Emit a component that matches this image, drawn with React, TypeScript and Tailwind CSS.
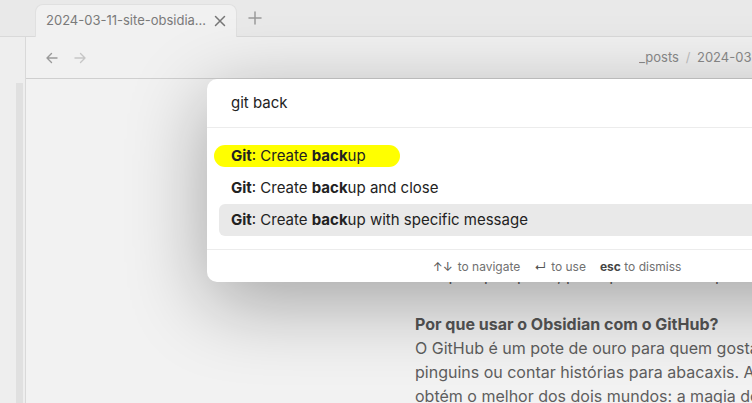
import React from "react";

function Item({ rest, selected, highlight }: { rest: string; selected?: boolean; highlight?: boolean }) {
  return (
    <div
      className={`relative h-[32px] flex items-center px-[12px] rounded-[6px] text-[15px] text-[#222] whitespace-nowrap ${
        selected ? "bg-[#e9e9e9]" : ""
      }`}
    >
      {highlight && (
        <span className="absolute left-[-5px] top-[5px] w-[186px] h-[22px] rounded-full bg-[#ffff00]" />
      )}
      <span className="relative">
        <span className="font-bold">Git</span>: Create <span className="font-bold">back</span>
        {rest}
      </span>
    </div>
  );
}

export default function App() {
  return (
    <div
      className="relative w-[752px] h-[403px] overflow-hidden bg-[#f2f2f2]"
      style={{ fontFamily: "Inter, 'Noto Sans', sans-serif" }}
    >
      {/* Tab bar */}
      <div className="h-[37px] flex items-end bg-[#e9e9e9]">
        <div className="w-[35px] h-full border-b border-[#d9d9d9]" />
        <div className="w-[202px] h-[33px] bg-[#f1f1f1] rounded-t-[8px] border border-b-0 border-[#e0e0e0] flex items-center pl-[10px] pr-[10px]">
          <span className="text-[13px] text-[#7a7a7a] whitespace-nowrap flex-1">2024-03-11-site-obsidia...</span>
          <svg width="12" height="12" viewBox="0 0 12 12" className="ml-[4px] mb-[1px]">
            <path d="M1.5 1.5 L10.5 10.5 M10.5 1.5 L1.5 10.5" stroke="#777" strokeWidth="1.5" strokeLinecap="round" />
          </svg>
        </div>
        <div className="flex-1 h-full border-b border-[#d9d9d9] flex items-center pl-[11px]">
          <svg width="14" height="14" viewBox="0 0 14 14" className="mb-[1px]">
            <path d="M7 1 V13 M1 7 H13" stroke="#9a9a9a" strokeWidth="1.5" strokeLinecap="round" />
          </svg>
        </div>
      </div>

      <div className="flex h-[366px]">
        {/* Left sidebar */}
        <div className="w-[26px] h-full bg-[#eeeeee] border-r border-[#d9d9d9] flex pt-[46px] pl-[16px]">
          <div className="w-[7px] h-full bg-[#e0e0e0]" />
        </div>

        {/* Main */}
        <div className="flex-1 flex flex-col min-w-0">
          <div className="h-[42px] bg-[#f1f1f1] border-b border-[#cfcfcf] flex items-center pl-[19px] pr-0">
            <svg width="14" height="14" viewBox="0 0 14 14">
              <path d="M12 7 H2 M6.5 2.5 L2 7 L6.5 11.5" stroke="#9a9a9a" strokeWidth="1.4" fill="none" strokeLinecap="round" strokeLinejoin="round" />
            </svg>
            <svg width="14" height="14" viewBox="0 0 14 14" className="ml-[14px]">
              <path d="M2 7 H12 M7.5 2.5 L12 7 L7.5 11.5" stroke="#c6c6c6" strokeWidth="1.4" fill="none" strokeLinecap="round" strokeLinejoin="round" />
            </svg>
            <div className="flex-1" />
            <div className="text-[13px] text-[#8a8a8a] whitespace-nowrap w-[113px] overflow-hidden">
              _posts <span className="text-[#c0c0c0] mx-[3px]">/</span> 2024-03-11-site
            </div>
          </div>
          <div className="flex-1 bg-[#f2f2f2] pl-[389px] pt-[184px] text-[16px] leading-[24px] text-[#5e5e5e] whitespace-nowrap overflow-hidden">
            <div>Sempre que quiser, pode publicar seus posts e o blog atualiza sozinho, gerando</div>
            <div className="h-[26px]" />
            <div className="font-bold text-[#555] leading-[23px]">Por que usar o Obsidian com o GitHub?</div>
            <div>O GitHub é um pote de ouro para quem gosta de programar</div>
            <div>pinguins ou contar histórias para abacaxis. Agora você</div>
            <div>obtém o melhor dos dois mundos: a magia do Obsidian</div>
          </div>
        </div>
      </div>

      {/* Modal */}
      <div className="absolute left-[207px] top-[79px] w-[700px] h-[203px] bg-white rounded-[10px] shadow-[0_20px_80px_rgba(0,0,0,0.33)] flex flex-col">
        <div className="h-[49px] flex items-center pl-[24px] pt-[1px] text-[15px] text-[#222] border-b border-[#ececec]">git back</div>
        <div className="px-[12px] pt-[12px] pb-[13px] flex flex-col">
          <Item rest="up" highlight />
          <Item rest="up and close" />
          <Item rest="up with specific message" selected />
        </div>
        <div className="flex-1 border-t border-[#ececec] flex items-center justify-center gap-[14px] text-[12px] text-[#707070] pt-[2px]">
          <span>
            <span className="text-[12px] text-[#555] mr-[5px]">↑↓</span>to navigate
          </span>
          <span>
            <span className="text-[12px] text-[#555] mr-[5px]">↵</span>to use
          </span>
          <span>
            <span className="font-bold text-[#444]">esc</span> to dismiss
          </span>
        </div>
      </div>
    </div>
  );
}
